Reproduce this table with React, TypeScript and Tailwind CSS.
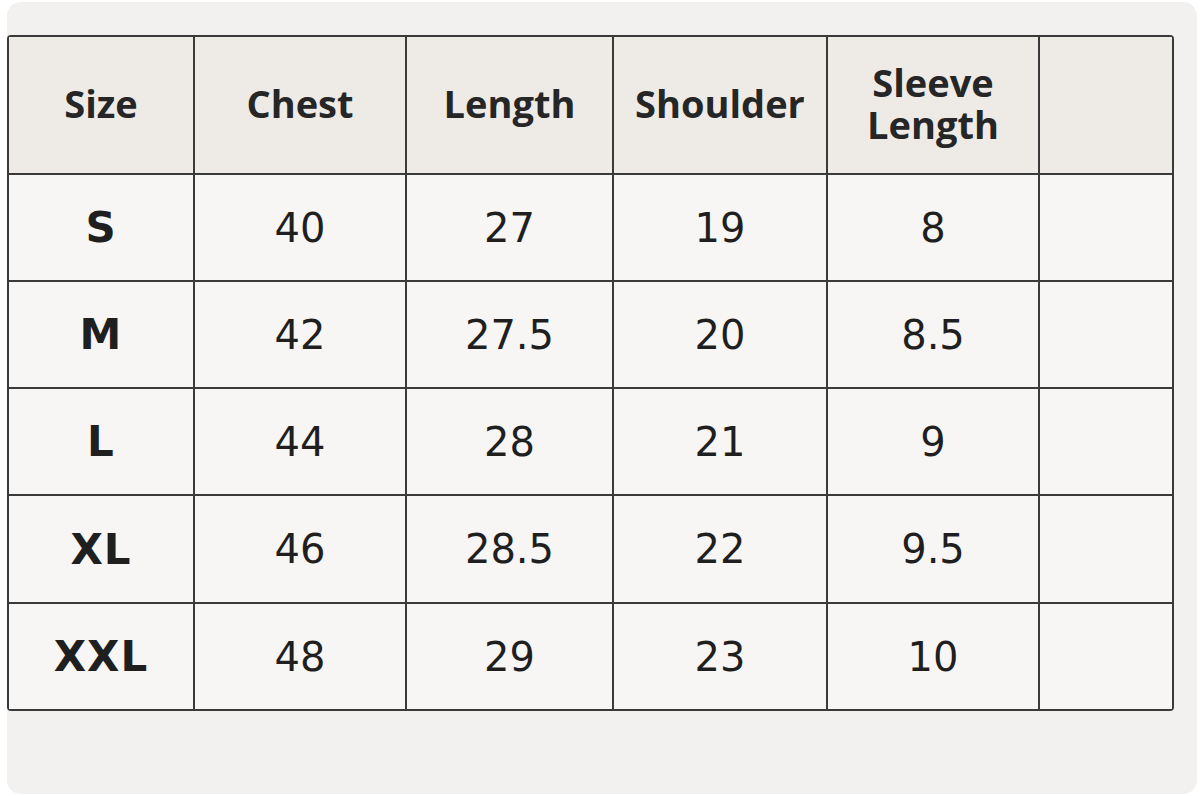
import React from "react";

const headers = ["Size", "Chest", "Length", "Shoulder", "Sleeve\nLength", ""];
const rows = [
  ["S", "40", "27", "19", "8", ""],
  ["M", "42", "27.5", "20", "8.5", ""],
  ["L", "44", "28", "21", "9", ""],
  ["XL", "46", "28.5", "22", "9.5", ""],
  ["XXL", "48", "29", "23", "10", ""],
];

export default function App() {
  return (
    <div className="w-[1200px] h-[796px] bg-white overflow-hidden">
      <div className="ml-[7px] mt-[2px] w-[1190px] h-[792px] rounded-[14px] bg-[#f3f1ef] pt-[33px]">
        <div className="grid w-[1167px] gap-[2px] p-[2px] bg-[#3a3a3a] rounded-[4px] overflow-hidden grid-cols-[184px_210px_205px_212px_210px_132px] grid-rows-[136px_105px_105px_105px_106px_105px]">
          {headers.map((h, i) => (
            <div
              key={"h" + i}
              className="bg-[#eeebe7] flex items-center justify-center pb-[4px] text-center text-[38px] font-bold text-[#262626] leading-[42px] whitespace-pre-line font-['Open_Sans',sans-serif]"
            >
              {h}
            </div>
          ))}
          {rows.map((r, ri) =>
            r.map((c, ci) => (
              <div
                key={ri + "-" + ci}
                className={
                  "bg-[#f7f6f4] flex items-center justify-center text-[#1f1f1f] font-['DejaVu_Sans',sans-serif] " +
                  (ci === 0 ? "text-[42px] font-bold tracking-[1px]" : "text-[40px] font-normal")
                }
              >
                {c}
              </div>
            ))
          )}
        </div>
      </div>
    </div>
  );
}
